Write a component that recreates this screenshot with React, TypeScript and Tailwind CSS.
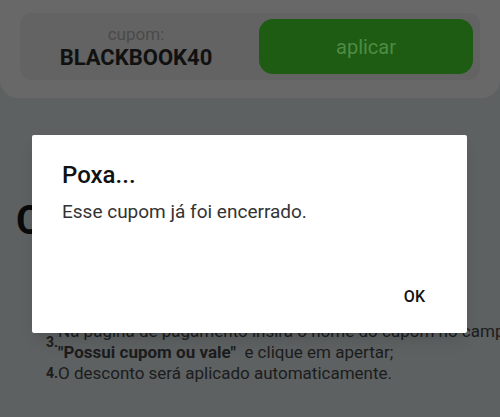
import React from 'react';

const Step = ({ n, children }: { n: string; children: React.ReactNode }) => (
  <li className="flex items-center">
    <span className="w-[12px] shrink-0 text-[14px] font-bold">{n}</span>
    <span className="whitespace-nowrap">{children}</span>
  </li>
);

export default function App() {
  return (
    <div className="relative w-[500px] h-[417px] overflow-hidden bg-[#5d6162] font-['Roboto',sans-serif]">
      <div className="h-[98px] rounded-b-[18px] bg-[#686868] px-[20px] pt-[13px]">
        <div className="flex h-[67px] items-center rounded-[12px] bg-[#636363] pr-[7px]">
          <div className="flex w-[232px] flex-col items-center pt-[1px]">
            <span className="text-[17px] leading-[20px] text-[#4a4a4a]">cupom:</span>
            <span className="text-[22px] leading-[27px] font-bold text-[#111]">BLACKBOOK40</span>
          </div>
          <button className="ml-auto flex h-[55px] w-[214px] items-center justify-center rounded-[14px] bg-[#1d5c12] text-[20px] text-[#4f8c44]">
            aplicar
          </button>
        </div>
      </div>

      <h2 className="mt-[99px] ml-[16px] text-[40px] leading-[48px] font-bold text-[#0a0a0a]">Como usar</h2>

      <ol className="mt-[34px] pl-[46px] text-[17px] leading-[21px] text-[#1c1c1c]">
        <Step n="1.">Copie o cupom acima;</Step>
        <Step n="2.">Vá até o carrinho;</Step>
        <Step n="3.">
          Na página de pagamento insira o nome do cupom no campo
          <br />
          <b>"Possui cupom ou vale"</b>&nbsp; e clique em apertar;
        </Step>
        <Step n="4.">O desconto será aplicado automaticamente.</Step>
      </ol>

      <div className="absolute left-[32px] top-[135px] flex h-[198px] w-[435px] flex-col rounded-[2px] bg-white shadow-lg">
        <h3 className="pl-[30px] pt-[25px] text-[24px] leading-[30px] font-medium text-[#111]">Poxa...</h3>
        <p className="pl-[30px] pt-[10px] text-[19px] leading-[24px] text-[#333]">Esse cupom já foi encerrado.</p>
        <div className="mt-auto flex justify-end pr-[34px] pb-[26px]">
          <button className="px-[8px] text-[16px] leading-[20px] font-medium text-[#111]">OK</button>
        </div>
      </div>
    </div>
  );
}
